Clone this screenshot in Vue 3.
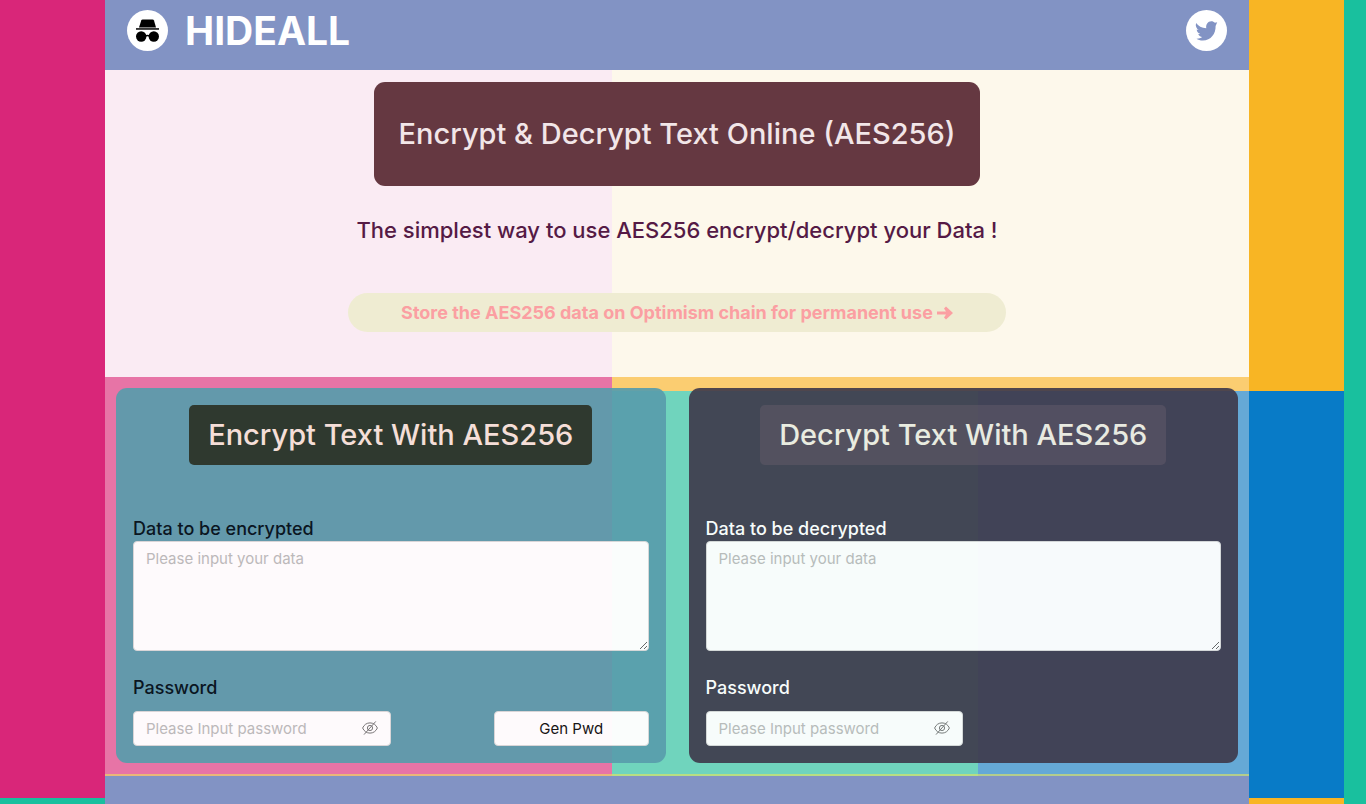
<script setup>
import { ref, reactive } from 'vue';

// form values of both cards
const encryptForm = reactive({ data: '', password: '' });
const decryptForm = reactive({ data: '', password: '' });

const showEncryptPwd = ref(false);
const showDecryptPwd = ref(false);

// fill the encrypt form with a random password
const genPwd = () => {
    const bytes = crypto.getRandomValues(new Uint8Array(12));
    encryptForm.password = Array.from(bytes, (b) => b.toString(16).padStart(2, '0')).join('');
};
</script>

<template>
    <div class="page">
        <header class="header">
            <a class="brand" href="#">
                <svg class="round-icon" viewBox="0 0 41 41" aria-hidden="true">
                    <circle cx="20.5" cy="20.5" r="20.5" fill="#fff" />
                    <path d="M12 17.6 14.2 10.4Q14.6 9.400 15.700 9.400H25.500Q26.600 9.400 27 10.400L29 17.600Z" />
                    <path d="M9 18.200h23v1.500H9z" />
                    <circle cx="14.200" cy="26.500" r="5.200" />
                    <circle cx="26.800" cy="26.500" r="5.200" />
                    <path d="M18 26q2.500-1.200 5 0" fill="none" stroke="#000" stroke-width="1.500" />
                </svg>
                <span class="name">HIDEALL</span>
            </a>
            <a class="twitter" href="#" aria-label="Twitter">
                <svg class="round-icon" viewBox="0 0 41 41" aria-hidden="true">
                    <circle cx="20.5" cy="20.5" r="20.5" fill="#fff" />
                    <path
                        fill="#8293c4"
                        d="M31.200 12.200 29.600 16C29.900 23.500 25 30.600 16.800 30.600c-2.600 0-4.800-.8-6.300-1.900 2.200.1 4.100-.5 5.700-1.700-1.900-.2-3.300-1.400-3.900-3.100.7.1 1.300.1 1.900-.1-2-.6-3.400-2.200-3.500-4.400.6.3 1.300.5 1.900.5-2.100-1.600-3.500-4-2.500-7 2.200 2.800 5.600 5.200 10.200 5.400-.8-3.700 1.600-7.100 5-7.100 1.500 0 2.700.6 3.600 1.500.9-.1 1.600-.3 2.300-.5z"
                    />
                </svg>
            </a>
        </header>

        <section class="hero">
            <h1>Encrypt &amp; Decrypt Text Online (AES256)</h1>
            <p>The simplest way to use AES256 encrypt/decrypt your Data !</p>
            <a class="store" href="#">
                Store the AES256 data on Optimism chain for permanent use
                <svg class="arrow" viewBox="0 0 16 14" aria-hidden="true">
                    <path d="M0 5.500h9L7 2.500 9 .5 16 7l-7 6.500-2-2 2-3H0z" fill="currentColor" />
                </svg>
            </a>
        </section>

        <main class="cards">
            <form class="card encrypt" @submit.prevent>
                <h2>Encrypt Text With AES256</h2>
                <label for="enc-data">Data to be encrypted</label>
                <textarea id="enc-data" v-model="encryptForm.data" placeholder="Please input your data"></textarea>
                <label class="pwd-label" for="enc-pwd">Password</label>
                <div class="row">
                    <div class="password">
                        <input
                            id="enc-pwd"
                            v-model="encryptForm.password"
                            :type="showEncryptPwd ? 'text' : 'password'"
                            placeholder="Please Input password"
                        />
                        <button type="button" class="eye" aria-label="Show password" @click="showEncryptPwd = !showEncryptPwd">
                            <svg viewBox="0 0 16 16" aria-hidden="true">
                                <path d="M.6 8Q3 2.900 8 2.900T15.400 8Q13 13.100 8 13.100T.6 8zM2 14.600 13.800 1.400" />
                                <circle cx="8" cy="8" r="2.600" />
                            </svg>
                        </button>
                    </div>
                    <button type="button" class="gen" @click="genPwd">Gen Pwd</button>
                </div>
            </form>

            <form class="card decrypt" @submit.prevent>
                <h2>Decrypt Text With AES256</h2>
                <label for="dec-data">Data to be decrypted</label>
                <textarea id="dec-data" v-model="decryptForm.data" placeholder="Please input your data"></textarea>
                <label class="pwd-label" for="dec-pwd">Password</label>
                <div class="row">
                    <div class="password">
                        <input
                            id="dec-pwd"
                            v-model="decryptForm.password"
                            :type="showDecryptPwd ? 'text' : 'password'"
                            placeholder="Please Input password"
                        />
                        <button type="button" class="eye" aria-label="Show password" @click="showDecryptPwd = !showDecryptPwd">
                            <svg viewBox="0 0 16 16" aria-hidden="true">
                                <path d="M.6 8Q3 2.900 8 2.900T15.400 8Q13 13.100 8 13.100T.6 8zM2 14.600 13.800 1.400" />
                                <circle cx="8" cy="8" r="2.600" />
                            </svg>
                        </button>
                    </div>
                </div>
            </form>
        </main>

        <footer class="footer"></footer>
    </div>
</template>

<style>
body {
    margin: 0;
}
</style>

<style scoped>
* {
    box-sizing: border-box;
}

/* colour blocks behind the whole page */
.page {
    display: flex;
    flex-direction: column;
    min-height: 100vh;
    padding: 0 117px 0 105px;
    font-family: Inter, "Liberation Sans", sans-serif;
    background:
        linear-gradient(#d92679, #d92679) 0 0 / 612px 798px no-repeat,
        linear-gradient(#f8b524, #f8b524) 612px 0 / 732px 391px no-repeat,
        linear-gradient(#19c09e, #19c09e) 612px 391px / 366px 407px no-repeat,
        linear-gradient(#087bc7, #087bc7) 978px 391px / 366px 407px no-repeat,
        linear-gradient(#f8b524, #f8b524) 612px 798px / 732px 391px no-repeat,
        #19c09e;
}

.header {
    display: flex;
    justify-content: space-between;
    align-items: flex-start;
    height: 70px;
    padding: 10px 22px;
    background: #8293c4;
}

.brand {
    display: flex;
    align-items: center;
    gap: 17px;
    color: #fff;
    text-decoration: none;
}

.name {
    font-size: 39px;
    line-height: 41px;
    font-weight: 700;
}

.round-icon {
    display: block;
    width: 41px;
    height: 41px;
}

.hero {
    display: flex;
    flex-direction: column;
    align-items: center;
    padding: 12px 12px 45px;
    background: rgba(253, 255, 255, 0.91);
}

h1 {
    margin: 0;
    padding: 32px 25px;
    border-radius: 11px;
    background: #653841;
    color: #f2e6e8;
    font-size: 29px;
    line-height: 40px;
    font-weight: 500;
}

.hero p {
    margin: 28px 0 47px;
    color: #551a45;
    font-size: 22px;
    line-height: 32px;
    font-weight: 500;
}

.store {
    display: flex;
    align-items: center;
    gap: 4px;
    padding: 0 53px;
    border-radius: 20px;
    background: #efecd2;
    color: #fb9fa2;
    font-size: 18px;
    line-height: 39px;
    font-weight: 700;
    text-decoration: none;
}

.arrow {
    width: 16px;
    height: 14px;
}

.cards {
    display: grid;
    grid-template-columns: 1fr 1fr;
    gap: 23px;
    padding: 11px;
    border-bottom: 2px solid rgba(238, 232, 120, 0.75);
    background: rgba(255, 245, 240, 0.38);
    background-clip: padding-box;
}

.card {
    display: flex;
    flex-direction: column;
    padding: 17px;
    border-radius: 11px;
}

.encrypt {
    background: rgba(89, 157, 172, 0.96);
    color: #04131c;
    opacity: 0.97;
}

.decrypt {
    background: rgba(62, 57, 75, 0.96);
    color: #fff;
    opacity: 0.95;
}

h2 {
    align-self: center;
    margin: 0 0 52px;
    padding: 10px 19px;
    border-radius: 5px;
    font-size: 29px;
    line-height: 40px;
    font-weight: 500;
}

.encrypt h2 {
    background: #2a382c;
    color: #f6e2da;
}

.decrypt h2 {
    background: #524b5b;
    color: #f0eee2;
}

label {
    font-size: 18px;
    line-height: 24px;
    font-weight: 500;
}

.pwd-label {
    margin: 25px 0 11px;
}

textarea,
input,
.gen {
    border: 1px solid #d9d9d9;
    border-radius: 4px;
    background: #fff;
    color: #111;
    font-family: inherit;
    font-size: 15px;
    line-height: 24px;
}

textarea {
    width: 100%;
    height: 110px;
    padding: 5px 12px;
    resize: vertical;
}

textarea::placeholder,
input::placeholder {
    color: #bbb;
    opacity: 1;
}

.row {
    display: flex;
    justify-content: space-between;
}

.password {
    position: relative;
    width: 50%;
}

input {
    width: 100%;
    height: 35px;
    padding: 0 36px 0 12px;
}

/* eye toggle lies over the right end of the input */
.eye {
    position: absolute;
    top: 9px;
    right: 13px;
    padding: 0;
    border: 0;
    background: none;
    cursor: pointer;
}

.eye svg {
    display: block;
    width: 16px;
    height: 16px;
    fill: none;
    stroke: #777;
    stroke-width: 1;
}

.gen {
    width: 30%;
    height: 35px;
    padding: 0;
    cursor: pointer;
}

.footer {
    flex: 1;
    background: #8293c4;
}
</style>
